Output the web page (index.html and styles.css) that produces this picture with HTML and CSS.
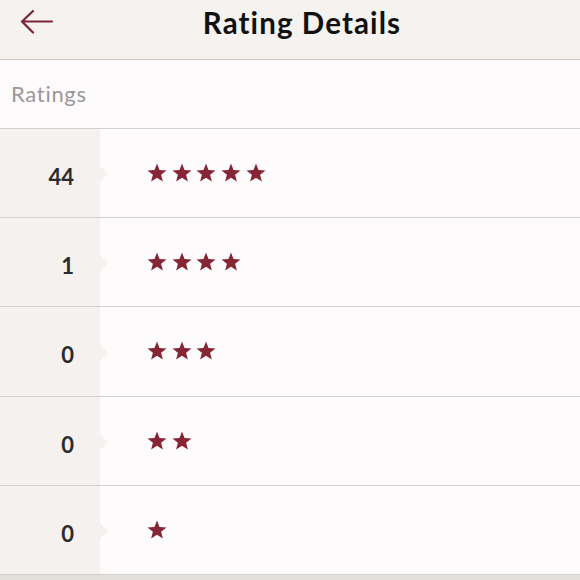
FILE: index.html
```html
<!DOCTYPE html>
<html>
<head>
<meta charset="utf-8">
<link rel="stylesheet" href="styles.css">
</head>
<body>
<div class="page">
  <header class="topbar">
    <svg class="back" width="34" height="28" viewBox="0 0 34 28"><path d="M2 11.5 H32 M13 1 L2 11.5 L13 22.5" fill="none" stroke="#7b2434" stroke-width="2.2" stroke-linecap="round" stroke-linejoin="round"/></svg>
    <h1 class="title">Rating Details</h1>
  </header>
  <div class="section">Ratings</div>
  <div class="rows">
    <div class="row"><div class="count">44</div><div class="stars" data-n="5"></div></div>
    <div class="row"><div class="count">1</div><div class="stars" data-n="4"></div></div>
    <div class="row row-tall"><div class="count">0</div><div class="stars" data-n="3"></div></div>
    <div class="row"><div class="count">0</div><div class="stars" data-n="2"></div></div>
    <div class="row"><div class="count">0</div><div class="stars" data-n="1"></div></div>
  </div>
  <div class="footer"></div>
</div>
<script>
document.querySelectorAll('.stars').forEach(function(el){
  var n = +el.getAttribute('data-n'), h = '';
  for (var i = 0; i < n; i++) {
    h += '<svg class="star" width="20" height="20" viewBox="0 0 20 20"><path d="M10 0.6 L12.53 7.02 L19.51 7.41 L14.09 11.83 L15.88 18.59 L10 14.8 L4.12 18.59 L5.91 11.83 L0.49 7.41 L7.47 7.02 Z" fill="#862536"/></svg>';
  }
  el.innerHTML = h;
});
</script>
</body>
</html>
```
FILE: styles.css
```css
* { box-sizing: border-box; }
html, body { margin: 0; padding: 0; }
body { width: 580px; height: 580px; overflow: hidden; background: #e3e0dc; font-family: Lato, "Open Sans", sans-serif; }
.page { display: flex; flex-direction: column; height: 580px; }
.topbar {
  height: 60px; flex: none; background: #f5f2ef; border-bottom: 1px solid #c9c5c1;
  position: relative; display: flex; align-items: center; justify-content: center;
}
.back { position: absolute; left: 20px; top: 10px; }
.title { margin: 0; font-size: 29.5px; font-weight: 700; color: #111; letter-spacing: 1.1px; position: relative; top: -7px; left: 12px; }
.section {
  height: 69px; flex: none; background: #fdfbfc; border-bottom: 1px solid #d3cfcb;
  font-size: 22px; letter-spacing: 0.7px; color: #9a9797; padding-left: 11px; display: flex; align-items: center; padding-bottom: 2px;
}
.rows { flex: none; background: #fdfbfc; }
.row { height: 89px; display: flex; border-bottom: 1px solid #d3cfcb; }
.row-tall { height: 90px; }
.count {
  width: 100px; flex: none; background: #f4f1ee; position: relative;
  display: flex; align-items: center; justify-content: flex-end; padding-right: 26px; padding-top: 6px;
  font-size: 22px; font-weight: 700; color: #2b2b2b;
}
.count::after {
  content: ""; position: absolute; left: 100px; top: 50%; margin-top: -7px;
  border-left: 8px solid #f4f1ee; border-top: 8px solid transparent; border-bottom: 8px solid transparent;
}
.stars { display: flex; align-items: center; gap: 4.7px; padding-left: 47px; padding-bottom: 1px; }
.star { display: block; }
.footer { flex: 1; background: #e3e0dc; }
```
